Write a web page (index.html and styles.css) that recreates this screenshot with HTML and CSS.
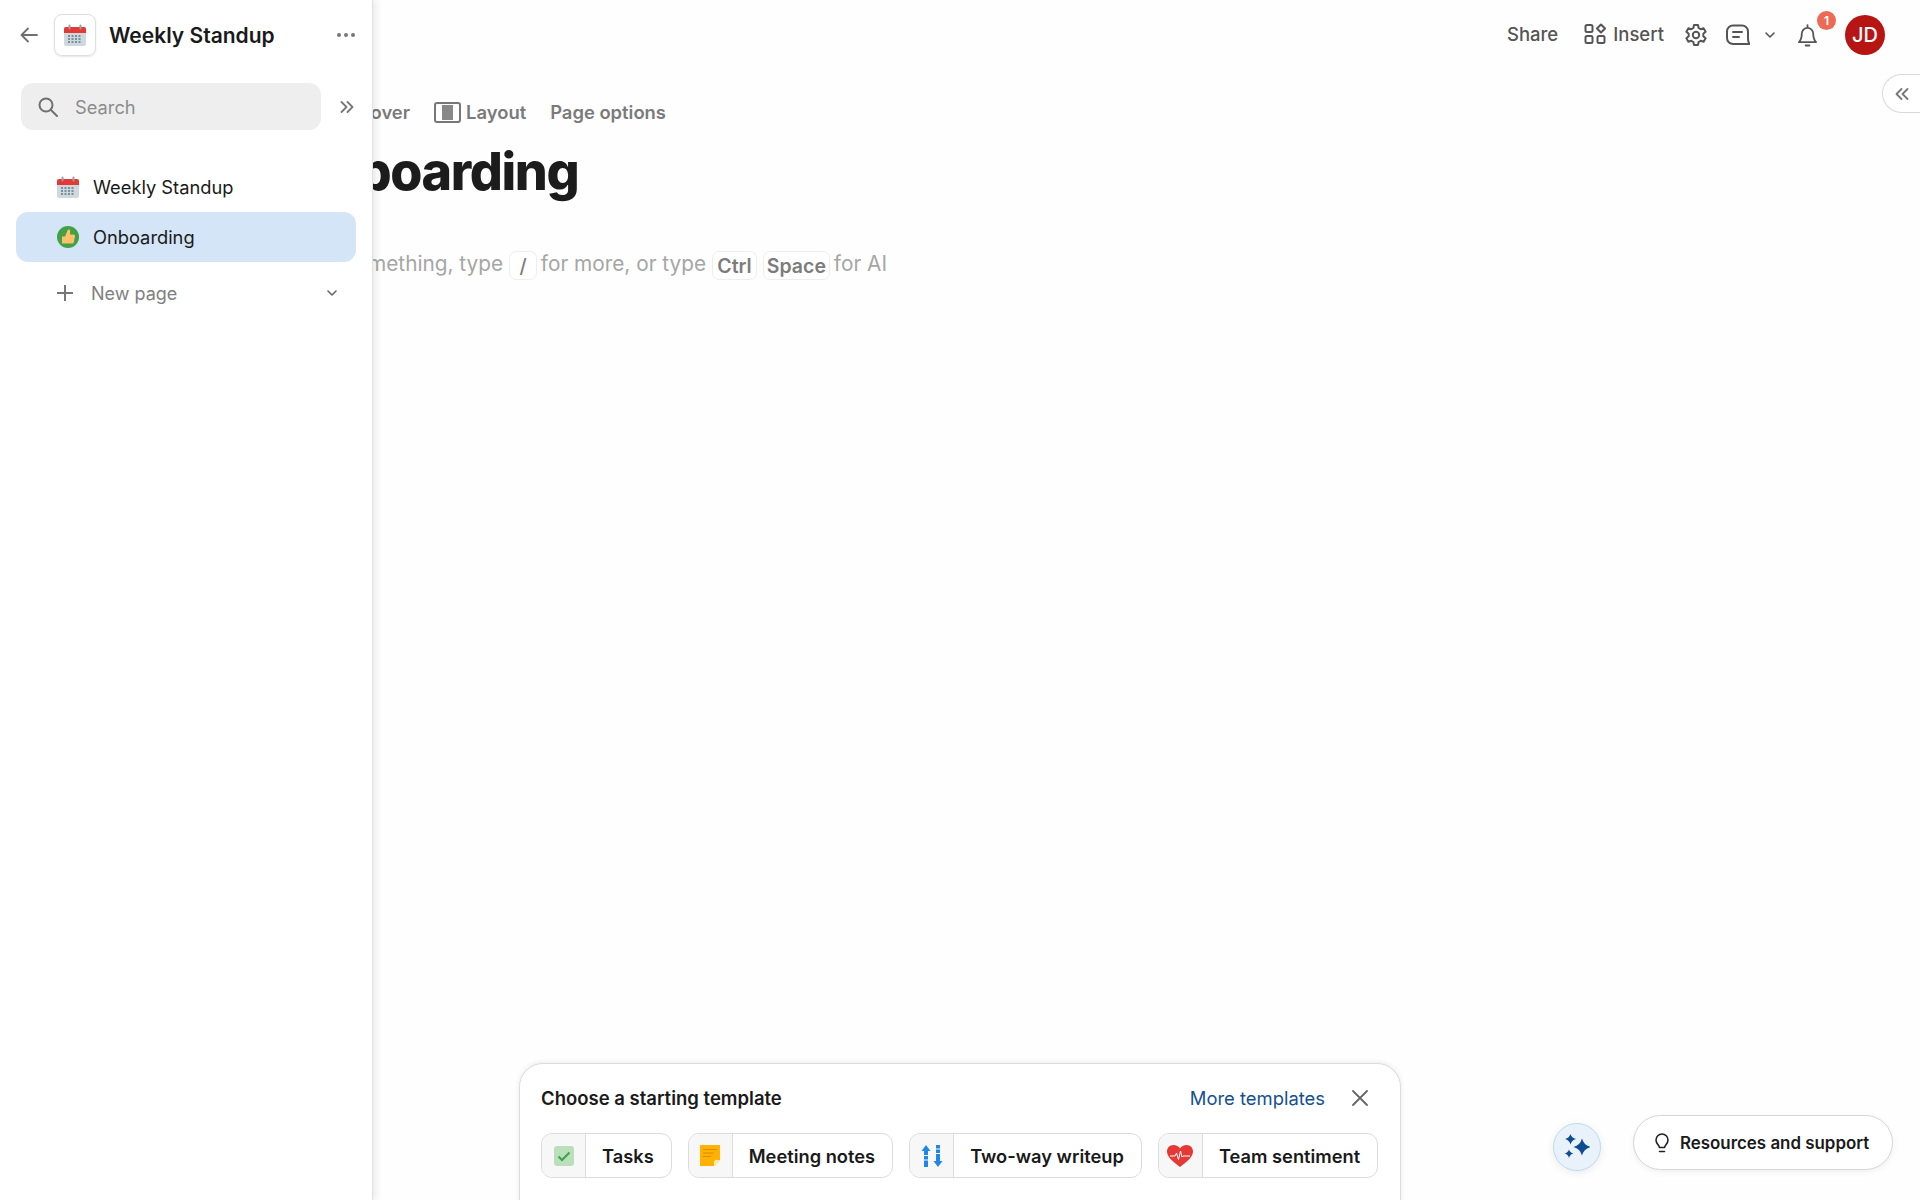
FILE: index.html

```html
<!DOCTYPE html>
<html lang="en">
<head>
  <meta charset="UTF-8">
  <title>Onboarding</title>
  <link rel="stylesheet" href="styles.css">
</head>

<body>
  <svg class="iconDefs" width="0" height="0">
    <defs>
      <symbol id="calendar" viewBox="0 0 22 22">
        <rect x="0" y="3" width="22" height="19" rx="2" fill="#cfd8dc"/>
        <path d="M0 9V5a2 2 0 0 1 2-2h18a2 2 0 0 1 2 2v4z" fill="#e53935"/>
        <rect x="4.5" y="0.5" width="2" height="5" rx="1" fill="#90a4ae"/>
        <rect x="15.5" y="0.5" width="2" height="5" rx="1" fill="#90a4ae"/>
        <g fill="#78909c">
          <rect x="4" y="11" width="2" height="2"/><rect x="7.5" y="11" width="2" height="2"/><rect x="11" y="11" width="2" height="2"/><rect x="14.5" y="11" width="2" height="2"/>
          <rect x="4" y="14" width="2" height="2"/><rect x="7.5" y="14" width="2" height="2"/><rect x="11" y="14" width="2" height="2"/><rect x="14.5" y="14" width="2" height="2"/>
          <rect x="4" y="17" width="2" height="2"/><rect x="7.5" y="17" width="2" height="2"/><rect x="11" y="17" width="2" height="2"/><rect x="14.5" y="17" width="2" height="2"/>
        </g>
      </symbol>
    </defs>
  </svg>

  <div class="page">
    <!-- Main page, runs under the sidebar -->
    <main class="main">
      <header class="topBar">
        <span class="topLink topShare">Share</span>
        <span class="topLink topInsert">
          <svg class="icon22" viewBox="0 0 22 22" fill="none" stroke="#555" stroke-width="2"><rect x="1.5" y="2" width="7" height="7" rx="1.5"/><path d="M17 1.5l4 4-4 4-4-4z" stroke-linejoin="round"/><rect x="1.5" y="13" width="7" height="7" rx="1.5"/><rect x="13.5" y="13" width="7" height="7" rx="1.5"/></svg>
          Insert
        </span>
        <svg class="topGear" viewBox="0 0 24 24" fill="none" stroke="#555" stroke-width="2" stroke-linejoin="round"><circle cx="12" cy="12" r="3.2"/><path d="M10 2h4l.6 3 2.1 1.2 2.9-1 2 3.5-2.3 2v2.6l2.3 2-2 3.5-2.9-1-2.1 1.2-.6 3h-4l-.6-3-2.1-1.2-2.9 1-2-3.5 2.3-2v-2.6l-2.3-2 2-3.5 2.9 1L9.400 5z"/></svg>
        <svg class="topComment" viewBox="0 0 24 22" fill="none" stroke="#555" stroke-width="2" stroke-linecap="round" stroke-linejoin="round"><path d="M7 1.500h9a6 6 0 0 1 6 6v7c0 2 .5 4 1.500 5.500H7a6 6 0 0 1-6-6v-6.500a6 6 0 0 1 6-6z"/><path d="M7 8h9M7 13h6"/></svg>
        <svg class="topChevron" viewBox="0 0 10 6" fill="none" stroke="#555" stroke-width="1.600" stroke-linecap="round" stroke-linejoin="round"><path d="M1 1l4 4 4-4"/></svg>
        <span class="bell">
          <svg class="bellIcon" viewBox="0 0 20 24" fill="none" stroke="#555" stroke-width="1.900" stroke-linecap="round" stroke-linejoin="round"><path d="M10 1v2M4 10a6 6 0 0 1 12 0c0 5 1 7 3 9H1c2-2 3-4 3-9zM8 22.500h4"/></svg>
          <span class="badge">1</span>
        </span>
        <span class="avatar">JD</span>
      </header>

      <section class="content">
        <div class="toolbar">
          <span class="toolItem">
            <svg class="coverIcon" viewBox="0 0 27 21" fill="none"><rect x="1" y="1" width="25" height="19" rx="2" stroke="#777" stroke-width="2"/></svg>
            Cover
          </span>
          <span class="toolItem">
            <svg class="coverIcon" viewBox="0 0 27 21" fill="none"><rect x="1" y="1" width="25" height="19" rx="2" stroke="#777" stroke-width="2"/><rect x="8" y="3" width="11" height="15" fill="#888"/></svg>
            Layout
          </span>
          <span class="toolItem">Page options</span>
        </div>
        <h1 class="pageTitle">Onboarding</h1>
        <p class="placeholder">
          Write something, type <kbd class="key keySlash">/</kbd> for more, or type <kbd class="key keyCtrl">Ctrl</kbd> <kbd class="key keySpace">Space</kbd> for AI
        </p>
      </section>

      <footer class="bottomArea">
        <div class="templatePanel">
          <div class="templateHead">
            <span class="templateTitle">Choose a starting template</span>
            <span class="templateMore">More templates</span>
            <svg class="templateClose" viewBox="0 0 16 16" fill="none" stroke="#666" stroke-width="1.800" stroke-linecap="round"><path d="M1 1l14 14M15 1L1 15"/></svg>
          </div>
          <div class="templateRow">
            <div class="chip">
              <span class="chipIcon">
                <svg class="icon20" viewBox="0 0 20 20"><rect width="20" height="20" rx="3" fill="#b9dfbb"/><path d="M4.500 10.500l3.500 3.500 7.500-7.500" fill="none" stroke="#43a047" stroke-width="2"/></svg>
              </span>
              <span class="chipLabel">Tasks</span>
            </div>
            <div class="chip">
              <span class="chipIcon">
                <svg class="icon20 iconNote" viewBox="0 0 20 21"><path d="M0 0h20v15l-6 6H0z" fill="#ffb300"/><path d="M14 21v-4a2 2 0 0 1 2-2h4z" fill="#ffe9a8"/><path d="M3 4.500h14M3 8h11M3 11.500h8" stroke="#e08a00" stroke-width="1.200"/></svg>
              </span>
              <span class="chipLabel">Meeting notes</span>
            </div>
            <div class="chip">
              <span class="chipIcon">
                <svg class="icon20 iconArrows" viewBox="0 0 22 22" fill="#1e88e5"><path d="M5 0l4.500 6H7v16H3V6H.5z" /><path d="M17 22l-4.500-6H15V0h4v16h2.500z"/><path d="M3 10.500h4M3 15h4M15 4h4M15 8.500h4" stroke="#f7f7f7" stroke-width="1.200"/></svg>
              </span>
              <span class="chipLabel">Two-way writeup</span>
            </div>
            <div class="chip">
              <span class="chipIcon">
                <svg class="iconHeart" viewBox="0 0 26 22"><path d="M13 22C5 16 0 11.500 0 6.500 0 2.800 2.800 0 6.500 0 9.200 0 11.700 1.400 13 3.500 14.300 1.400 16.800 0 19.500 0 23.200 0 26 2.800 26 6.500 26 11.500 21 16 13 22z" fill="#e53935"/><path d="M3 11h5l1.500-3 2 6.500 2-8.500 1.500 6 1-1h7" fill="none" stroke="#fff" stroke-width="1"/></svg>
              </span>
              <span class="chipLabel">Team sentiment</span>
            </div>
          </div>
        </div>

        <div class="helpArea">
          <span class="sparkButton">
            <svg class="sparkIcon" viewBox="0 0 26 26" fill="#0f4c94"><path d="M18 4.500Q19.800 11.200 26.500 13 19.800 14.800 18 21.500 16.200 14.800 9.500 13 16.200 11.200 18 4.500z"/><path d="M6.500 0Q7.600 3.900 12 5 7.600 6.100 6.500 10.500 5.400 6.100 1 5 5.400 3.900 6.500 0z"/><path d="M5 15.500Q5.900 18.600 9.500 19.500 5.900 20.400 5 24 4.100 20.400 .5 19.500 4.100 18.600 5 15.500z"/></svg>
          </span>
          <span class="helpPill">
            <svg class="bulbIcon" viewBox="0 0 14 20" fill="none" stroke="#222" stroke-width="1.600" stroke-linecap="round"><path d="M4.500 14.500c0-2-3.500-3.500-3.500-7.500a6 6 0 0 1 12 0c0 4-3.500 5.500-3.500 7.500z" stroke-linejoin="round"/><path d="M4.500 18.500h5"/></svg>
            Resources and support
          </span>
        </div>
      </footer>

      <span class="collapseTab">
        <svg class="doubleChevron" viewBox="0 0 14 12" fill="none" stroke="#777" stroke-width="1.800" stroke-linecap="round" stroke-linejoin="round"><path d="M6.500 1l-5 5 5 5M12.500 1l-5 5 5 5"/></svg>
      </span>
    </main>

    <!-- Sidebar sits on top of the page -->
    <aside class="sidebar">
      <div class="sideHead">
        <svg class="backArrow" viewBox="0 0 18 16" fill="none" stroke="#6f6f6f" stroke-width="1.800" stroke-linecap="round" stroke-linejoin="round"><path d="M17 8H1.500M8 1.500L1.500 8 8 14.500"/></svg>
        <span class="sideLogo"><svg class="calendarBig"><use href="#calendar"/></svg></span>
        <span class="sideTitle">Weekly Standup</span>
        <span class="sideDots"><i></i><i></i><i></i></span>
      </div>
      <div class="searchRow">
        <div class="searchBox">
          <svg class="searchIcon" viewBox="0 0 20 20" fill="none" stroke="#6f6f6f" stroke-width="2" stroke-linecap="round"><circle cx="8" cy="8" r="6.500"/><path d="M13 13l6 6"/></svg>
          <span class="searchText">Search</span>
        </div>
        <svg class="doubleChevron" viewBox="0 0 14 12" fill="none" stroke="#777" stroke-width="1.800" stroke-linecap="round" stroke-linejoin="round"><path d="M1.500 1l5 5-5 5M7.500 1l5 5-5 5"/></svg>
      </div>
      <nav class="pageList">
        <div class="pageRow">
          <svg class="rowIcon"><use href="#calendar"/></svg>
          Weekly Standup
        </div>
        <div class="pageRow pageRowActive">
          <svg class="rowIcon" viewBox="0 0 22 22"><circle cx="11" cy="11" r="11" fill="#43a047"/><path d="M5 10.500h3L10.800 4c.4-.9 2.300-.6 2.300.8V8.500h3.500c1 0 1.600.8 1.400 1.700l-1.200 6c-.1.700-.8 1.300-1.500 1.300H5z" fill="#fdc06b"/></svg>
          Onboarding
        </div>
      </nav>
      <div class="newPage">
        <svg class="plusIcon" viewBox="0 0 16 16" stroke="#777" stroke-width="2"><path d="M8 0v16M0 8h16"/></svg>
        <span class="newPageLabel">New page</span>
        <svg class="newPageChevron" viewBox="0 0 10 6" fill="none" stroke="#666" stroke-width="1.600" stroke-linecap="round" stroke-linejoin="round"><path d="M1 1l4 4 4-4"/></svg>
      </div>
    </aside>
  </div>
</body>
</html>
```

FILE: styles.css

```css
* {
  box-sizing: border-box;
}
html, body {
  margin: 0;
  height: 100%;
  overflow: hidden;
}
body {
  font-family: Inter, "Noto Sans", sans-serif;
  color: #1a1a1a;
  background-color: #fefefe;
}
.iconDefs {
  position: absolute;
}
.page {
  position: relative;
  width: 1920px;
  height: 1200px;
  overflow: hidden;
}

/* main */
.main {
  display: flex;
  flex-direction: column;
  height: 100%;
}
.topBar {
  display: flex;
  align-items: center;
  justify-content: flex-end;
  height: 70px;
  flex-shrink: 0;
  padding: 0 35px 0 0;
}
.topLink {
  display: flex;
  align-items: center;
  font-size: 18.500px;
  font-weight: 500;
  color: #555;
  margin-bottom: 2px;
}
.topShare {
  margin-right: 26px;
}
.topInsert {
  gap: 7px;
  margin-right: 20px;
}
.icon22 {
  width: 22px;
  height: 22px;
}
.topGear {
  width: 24px;
  height: 24px;
  margin-right: 18px;
}
.topComment {
  width: 24px;
  height: 22px;
  margin-right: 15px;
}
.topChevron {
  width: 10px;
  height: 6px;
  margin-right: 23px;
}
.bell {
  position: relative;
  display: flex;
  margin-right: 28px;
}
.bellIcon {
  width: 19px;
  height: 23px;
}
.badge {
  position: absolute;
  left: 19px;
  top: -13px;
  width: 19px;
  height: 19px;
  border-radius: 50%;
  background-color: #ec6a56;
  color: #fff;
  font-size: 12px;
  font-weight: 600;
  display: flex;
  align-items: center;
  justify-content: center;
}
.avatar {
  width: 40px;
  height: 40px;
  border-radius: 50%;
  background-color: #b71414;
  color: #fff;
  font-size: 20px;
  font-weight: 500;
  display: flex;
  align-items: center;
  justify-content: center;
}
.collapseTab {
  position: absolute;
  right: 0;
  top: 74px;
  width: 38px;
  height: 39px;
  border: 1px solid #d9d9d9;
  border-right: none;
  border-radius: 20px 0 0 20px;
  background-color: #fff;
  display: flex;
  align-items: center;
  padding-left: 12px;
}
.doubleChevron {
  width: 14px;
  height: 12px;
  flex-shrink: 0;
}

/* page body */
.content {
  flex: 1;
  padding: 30px 0 0 288px;
}
.toolbar {
  display: flex;
  align-items: center;
  gap: 24px;
  height: 24px;
  padding-left: 37px;
}
.toolItem {
  display: flex;
  align-items: center;
  gap: 5px;
  font-size: 18.400px;
  font-weight: 600;
  color: #7a7a7a;
}
.coverIcon {
  width: 27px;
  height: 21px;
}
.pageTitle {
  margin: 16px 0 0;
  font-size: 52px;
  line-height: 64px;
  font-weight: 800;
  letter-spacing: -1.400px;
  color: #1c1c1c;
}
.placeholder {
  margin: 45px 0 0 -1px;
  font-size: 20.800px;
  line-height: 30px;
  color: #a6a6a6;
}
.key {
  display: inline-block;
  min-width: 28px;
  height: 29px;
  padding: 0 3px;
  border: 1px solid #eee;
  border-radius: 7px;
  background-color: #fff;
  font-family: inherit;
  font-size: 19.500px;
  font-weight: 600;
  line-height: 28px;
  text-align: center;
  color: #7c7c7c;
  vertical-align: middle;
}
.keyCtrl {
  min-width: 45px;
}
.keySpace {
  margin-right: -2px;
}
.keySlash {
  font-weight: 500;
  margin-right: -2px;
}

/* bottom */
.bottomArea {
  display: grid;
  grid-template-columns: 882px 1fr;
  height: 137px;
  flex-shrink: 0;
  padding-left: 519px;
}
.templatePanel {
  height: 170px;
  border: 1px solid #dcdcdc;
  border-radius: 24px;
  background-color: #fff;
  box-shadow: 0 -1px 5px rgba(0, 0, 0, 0.08);
  padding: 22px 21px 0;
}
.templateHead {
  display: flex;
  align-items: center;
  height: 24px;
}
.templateTitle {
  font-size: 18.500px;
  font-weight: 600;
  flex: 1;
}
.templateMore {
  font-size: 18.400px;
  color: #15508f;
  margin-right: 27px;
}
.templateClose {
  width: 16px;
  height: 16px;
  margin-right: 11px;
}
.templateRow {
  display: flex;
  gap: 16px;
  margin-top: 23px;
}
.chip {
  display: flex;
  flex-shrink: 0;
  height: 45px;
  border: 1px solid #dcdcdc;
  border-radius: 11px;
  overflow: hidden;
}
.chipIcon {
  width: 44px;
  flex-shrink: 0;
  background-color: #f7f7f7;
  border-right: 1px solid #dcdcdc;
  display: flex;
  align-items: center;
  justify-content: center;
}
.chipLabel {
  display: flex;
  align-items: center;
  padding: 0 17px 0 16px;
  font-size: 18.300px;
  font-weight: 600;
  white-space: nowrap;
}
.icon20 {
  width: 20px;
  height: 20px;
}
.iconNote {
  height: 21px;
}
.iconArrows {
  width: 22px;
  height: 22px;
}
.iconHeart {
  width: 26px;
  height: 22px;
}
.helpArea {
  display: flex;
  align-items: flex-start;
  padding: 52px 0 0 152px;
  gap: 32px;
}
.sparkButton {
  width: 48px;
  height: 48px;
  margin-top: 8px;
  border: 1px solid #bcdcf0;
  border-radius: 50%;
  background-color: #e9f2fa;
  box-shadow: 0 2px 8px rgba(0, 0, 0, 0.08);
  display: flex;
  align-items: center;
  justify-content: center;
}
.sparkIcon {
  width: 26px;
  height: 26px;
}
.helpPill {
  width: 260px;
  height: 55px;
  border: 1px solid #d6d6d6;
  border-radius: 28px;
  background-color: #fff;
  box-shadow: 0 2px 6px rgba(0, 0, 0, 0.06);
  display: flex;
  align-items: center;
  gap: 11px;
  padding-left: 21px;
  font-size: 16.900px;
  font-weight: 600;
}
.bulbIcon {
  width: 14px;
  height: 20px;
}

/* sidebar */
.sidebar {
  position: absolute;
  left: 0;
  top: 0;
  width: 373px;
  height: 100%;
  background-color: #fff;
  border-right: 1px solid #e2e2e2;
  box-shadow: 2px 0 8px rgba(0, 0, 0, 0.1);
}
.sideHead {
  display: flex;
  align-items: center;
  height: 70px;
  padding-left: 20px;
}
.backArrow {
  width: 18px;
  height: 16px;
  margin-right: 16px;
}
.sideLogo {
  width: 42px;
  height: 42px;
  border: 1px solid #dedede;
  border-radius: 8px;
  box-shadow: 0 1px 2px rgba(0, 0, 0, 0.1);
  display: flex;
  align-items: center;
  justify-content: center;
  margin-right: 13px;
}
.calendarBig {
  width: 22px;
  height: 22px;
}
.sideTitle {
  flex: 1;
  font-size: 21px;
  font-weight: 600;
}
.sideDots {
  display: flex;
  gap: 3px;
  margin-right: 17px;
}
.sideDots i {
  width: 4px;
  height: 4px;
  border-radius: 50%;
  background-color: #777;
}
.searchRow {
  display: flex;
  align-items: center;
  padding: 13px 0 0 21px;
  gap: 19px;
}
.searchBox {
  width: 300px;
  height: 47px;
  border-radius: 12px;
  background-color: #eeeeee;
  display: flex;
  align-items: center;
  gap: 17px;
  padding-left: 17px;
  font-size: 18.300px;
  color: #8c8c8c;
}
.searchText {
  padding-top: 1px;
}
.searchIcon {
  width: 20px;
  height: 20px;
}
.pageList {
  padding: 32px 16px 0;
  display: flex;
  flex-direction: column;
}
.pageRow {
  display: flex;
  align-items: center;
  gap: 14px;
  height: 50px;
  padding-left: 41px;
  border-radius: 12px;
  font-size: 18.300px;
}
.pageRowActive {
  background-color: #d3e5f6;
}
.rowIcon {
  width: 22px;
  height: 22px;
}
.newPage {
  display: flex;
  align-items: center;
  padding: 6px 0 0 57px;
  height: 56px;
  font-size: 18px;
  color: #808080;
}
.plusIcon {
  width: 16px;
  height: 16px;
  margin-right: 18px;
}
.newPageLabel {
  width: 236px;
}
.newPageChevron {
  width: 10px;
  height: 6px;
}
```
